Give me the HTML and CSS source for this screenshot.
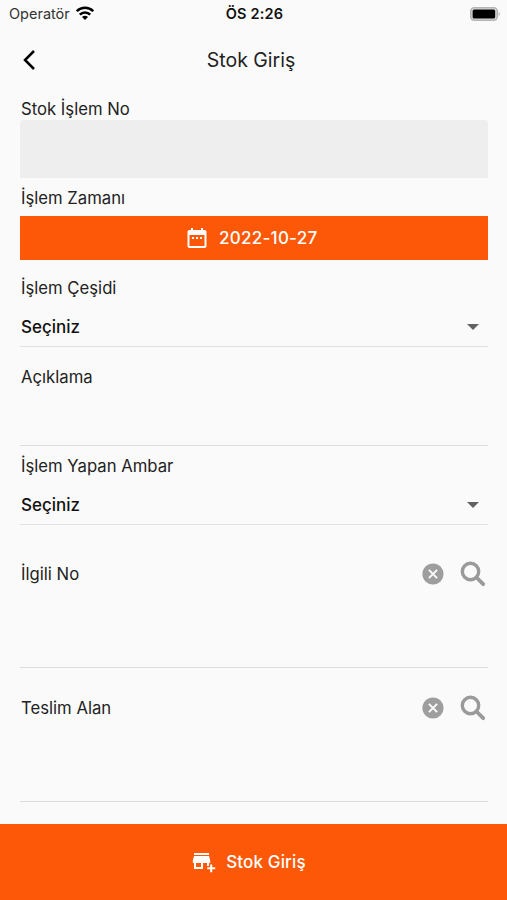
FILE: index.html
```html
<!DOCTYPE html>
<html lang="tr">
<head>
    <meta charset="UTF-8">
    <meta name="viewport" content="width=device-width, initial-scale=1.0">
    <title>Stok Giriş</title>
    <link rel="stylesheet" href="styles.css">
</head>
<body>
    <div class="status-bar">
        <div class="carrier">
            <span>Operatör</span>
            <svg class="wifi" width="18" height="14" viewBox="0 0 18 14" fill="none" stroke="#000" stroke-width="2.5">
                <path d="M.8 5.200a11.600 11.600 0 0 1 16.400 0"/>
                <path d="M3.800 8.600a7.300 7.300 0 0 1 10.400 0"/>
                <path d="M9 14L6 11a4.200 4.200 0 0 1 6 0z" fill="#000" stroke="none"/>
            </svg>
        </div>
        <div class="time">ÖS 2:26</div>
        <svg class="battery" width="31" height="14" viewBox="0 0 31 14">
            <rect x="0.8" y="0.8" width="26.400" height="12.400" rx="3.400" fill="#ddd" stroke="#b4b4b4" stroke-width="1.600"/>
            <rect x="2.600" y="2.400" width="22.600" height="9.200" rx="1.500" fill="#000"/>
            <path d="M28.600 4.800a2.600 2.600 0 0 1 0 4.400z" fill="#b0b0b0"/>
        </svg>
    </div>

    <header class="app-bar">
        <button type="button" class="back-btn" aria-label="Geri">
            <svg width="14" height="20" viewBox="0 0 14 20" fill="none" stroke="#000" stroke-width="2.500">
                <path d="M12 1L3 10l9 9"/>
            </svg>
        </button>
        <h1>Stok Giriş</h1>
    </header>

    <main class="form">
        <div class="field">
            <label for="stokNo">Stok İşlem No</label>
            <input type="text" id="stokNo" class="input-filled" disabled>
        </div>

        <div class="field">
            <label>İşlem Zamanı</label>
            <button type="button" class="date-btn">
                <svg width="24" height="24" viewBox="0 0 24 24" fill="#fff">
                    <path d="M19.500 4H18V2h-2v2H8V2H6v2H4.500c-1.200 0-2 .9-2 2v14c0 1.100.8 2 2 2h15c1.200 0 2-.9 2-2V6c0-1.100-.8-2-2-2zm0 16h-15V9h15v11zM9 13H7v-2h2v2zm4 0h-2v-2h2v2zm4 0h-2v-2h2v2z"/>
                </svg>
                <span>2022-10-27</span>
            </button>
        </div>

        <div class="field">
            <label>İşlem Çeşidi</label>
            <div class="select">
                <span>Seçiniz</span>
                <svg width="12" height="6" viewBox="0 0 12 6"><path d="M0 0h12L6 6z" fill="#616161"/></svg>
            </div>
        </div>

        <div class="field">
            <label for="aciklama">Açıklama</label>
            <input type="text" id="aciklama" class="input-line">
        </div>

        <div class="field">
            <label>İşlem Yapan Ambar</label>
            <div class="select">
                <span>Seçiniz</span>
                <svg width="12" height="6" viewBox="0 0 12 6"><path d="M0 0h12L6 6z" fill="#616161"/></svg>
            </div>
        </div>

        <div class="lookup">
            <div class="lookup-head">
                <label for="ilgiliNo">İlgili No</label>
                <button type="button" class="icon-btn" aria-label="Temizle">
                    <svg width="22" height="22" viewBox="0 0 22 22">
                        <circle cx="11" cy="11" r="10.600" fill="#9e9e9e"/>
                        <path d="M6.900 6.900l8.200 8.200M15.100 6.900l-8.200 8.200" stroke="#fafafa" stroke-width="2"/>
                    </svg>
                </button>
                <button type="button" class="icon-btn" aria-label="Ara">
                    <svg width="26" height="26" viewBox="0 0 26 26" fill="none" stroke="#9a9a9a" stroke-width="3.400">
                        <circle cx="10.500" cy="10.500" r="8.200"/>
                        <path d="M16.500 16.500l6.700 6.700" stroke-width="3.800" stroke-linecap="round"/>
                    </svg>
                </button>
            </div>
            <input type="text" id="ilgiliNo" class="input-line tall">
        </div>

        <div class="lookup">
            <div class="lookup-head">
                <label for="teslimAlan">Teslim Alan</label>
                <button type="button" class="icon-btn" aria-label="Temizle">
                    <svg width="22" height="22" viewBox="0 0 22 22">
                        <circle cx="11" cy="11" r="10.600" fill="#9e9e9e"/>
                        <path d="M6.900 6.900l8.200 8.200M15.100 6.900l-8.200 8.200" stroke="#fafafa" stroke-width="2"/>
                    </svg>
                </button>
                <button type="button" class="icon-btn" aria-label="Ara">
                    <svg width="26" height="26" viewBox="0 0 26 26" fill="none" stroke="#9a9a9a" stroke-width="3.400">
                        <circle cx="10.500" cy="10.500" r="8.200"/>
                        <path d="M16.500 16.500l6.700 6.700" stroke-width="3.800" stroke-linecap="round"/>
                    </svg>
                </button>
            </div>
            <input type="text" id="teslimAlan" class="input-line tall">
        </div>
    </main>

    <button type="button" class="submit-btn">
        <svg width="24" height="22" viewBox="0 0 24 22" fill="#fff">
            <path d="M2 2h15v2H2z"/>
            <path d="M2 5h15l1.200 4.500v2.500H17v3h-2v-3h-4v6H2v-6H.8V9.500zM4 12v4h5v-4z" fill-rule="evenodd"/>
            <path d="M18.200 13.500h2v2.800h3v2h-3v3h-2v-3h-3v-2h3z"/>
        </svg>
        <span>Stok Giriş</span>
    </button>
</body>
</html>
```

FILE: styles.css
```css
* {
    box-sizing: border-box;
}

body {
    display: flex;
    flex-direction: column;
    height: 900px;
    margin: 0;
    overflow: hidden;
    background-color: #fafafa;
    color: #222;
    font-family: Inter, "Liberation Sans", sans-serif;
    font-size: 16.7px;
}

button {
    border: none;
    padding: 0;
    background: none;
    font-family: inherit;
    cursor: pointer;
}

svg {
    display: block;
    flex: none;
}

/* Status bar */
.status-bar {
    display: grid;
    grid-template-columns: 1fr auto 1fr;
    align-items: center;
    height: 27px;
    padding: 0 6px 0 9px;
    font-size: 14.500px;
}

.carrier {
    display: flex;
    align-items: center;
    gap: 6px;
    color: #333;
}

.wifi {
    margin-bottom: 2px;
}

.time {
    margin-right: 1px;
    font-weight: 600;
    letter-spacing: 0.2px;
    color: #111;
}

.battery {
    justify-self: end;
}

/* App bar */
.app-bar {
    display: grid;
    grid-template-columns: 40px 1fr 40px;
    align-items: center;
    height: 65px;
    padding: 0 22px;
}

.back-btn {
    justify-self: start;
}

h1 {
    margin: 0;
    padding-right: 5px;
    text-align: center;
    font-size: 19.5px;
    font-weight: 400;
}

/* Form */
.form {
    flex: 1;
    padding: 6px 19.5px 0 20px;
    overflow: hidden;
}

.field {
    display: flex;
    flex-direction: column;
    height: 89.25px;
}

label {
    padding-left: 1px;
    line-height: 22px;
}

.input-filled {
    height: 58px;
    border: none;
    border-radius: 4px 4px 0 0;
    background-color: #eee;
}

.date-btn {
    display: flex;
    align-items: center;
    justify-content: center;
    gap: 10px;
    height: 44px;
    margin-top: 7px;
    padding-right: 5px;
    background-color: #fc5807;
    color: #fff;
    font-size: 17px;
    font-weight: 500;
    letter-spacing: 0.25px;
}

.select {
    display: flex;
    align-items: center;
    justify-content: space-between;
    height: 39px;
    margin-top: 9px;
    padding: 0 9px 0 1px;
    border-bottom: 1px solid #e2e2e2;
    font-size: 17px;
    font-weight: 500;
    color: #111;
}

.input-line {
    width: 100%;
    height: 58px;
    border: none;
    border-bottom: 1px solid #dedede;
    background: none;
}

.input-line.tall {
    height: 70px;
}

.lookup {
    height: 133.5px;
    padding-top: 6px;
}

.lookup-head {
    display: flex;
    align-items: center;
    height: 48px;
}

.lookup-head label {
    flex: 1;
}

.icon-btn + .icon-btn {
    margin: 0 2px 0 16px;
}

/* Bottom button */
.submit-btn {
    display: flex;
    align-items: center;
    justify-content: center;
    gap: 10px;
    height: 76px;
    padding-right: 9px;
    background-color: #fc5807;
    color: #fff;
    font-size: 17px;
    font-weight: 500;
    letter-spacing: 0.15px;
}
```
